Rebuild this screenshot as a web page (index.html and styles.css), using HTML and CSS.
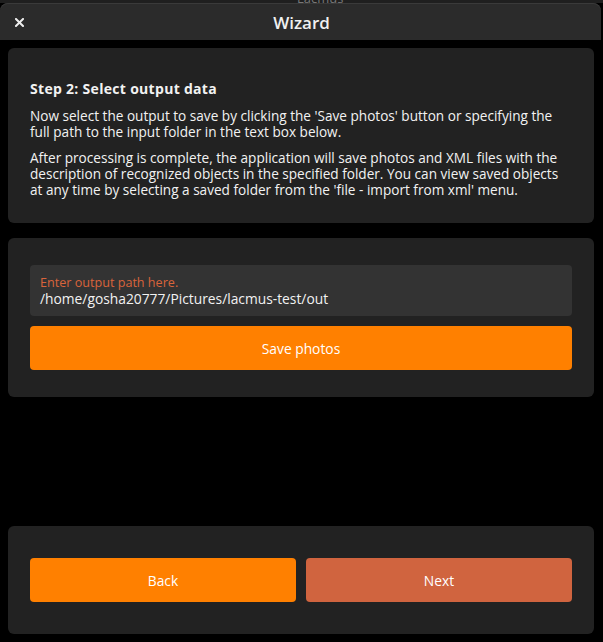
FILE: index.html
```html
<!DOCTYPE html>
<html>
<head>
<meta charset="utf-8">
<link rel="stylesheet" href="styles.css">
</head>
<body>
<div class="behind"><span class="behind-title">Lacmus</span></div>
<div class="window">
  <div class="titlebar">
    <svg class="close" width="9" height="9" viewBox="0 0 9 9"><path d="M1 1L8 8M8 1L1 8" stroke="#eee" stroke-width="2" stroke-linecap="square"/></svg>
    <span class="title">Wizard</span>
  </div>
  <div class="content">
    <section class="panel panel-info">
      <h2 class="heading">Step 2: Select output data</h2>
      <p class="text">Now select the output to save by clicking the 'Save photos' button or specifying the full path to the input folder in the text box below.</p>
      <p class="text">After processing is complete, the application will save photos and XML files with the description of recognized objects in the specified folder. You can view saved objects at any time by selecting a saved folder from the 'file - import from xml' menu.</p>
    </section>
    <section class="panel panel-input">
      <div class="field">
        <div class="field-label">Enter output path here.</div>
        <div class="field-value">/home/gosha20777/Pictures/lacmus-test/out</div>
      </div>
      <button class="btn btn-primary">Save photos</button>
    </section>
    <div class="spacer"></div>
    <section class="panel panel-nav">
      <button class="btn btn-primary">Back</button>
      <button class="btn btn-next">Next</button>
    </section>
  </div>
</div>
</body>
</html>
```

FILE: styles.css
```css
html, body {
  margin: 0;
  padding: 0;
  background: #000;
  width: 603px;
  height: 642px;
  overflow: hidden;
  font-family: "Open Sans", "Noto Sans", sans-serif;
  color: #f2f2f2;
}
.behind {
  height: 3px;
  background: #1f1f1f;
  position: relative;
  overflow: hidden;
}
.behind-title {
  position: absolute;
  left: 297px;
  top: -11px;
  font-size: 13px;
  color: #777;
}
.window {
  width: 601px;
  height: 639px;
  display: flex;
  flex-direction: column;
}
.titlebar {
  height: 37px;
  flex: none;
  background: #2b2b2b;
  border-radius: 8px 8px 0 0;
  box-shadow: inset 0 1px 0 #3a3a3a;
  display: flex;
  align-items: center;
  justify-content: center;
  position: relative;
}
.close {
  position: absolute;
  left: 15px;
  top: 15px;
}
.title {
  font-size: 17px;
  font-weight: 600;
  color: #f0f0f0;
  margin-left: 2px;
  margin-top: 2px;
}
.content {
  flex: 1;
  display: flex;
  flex-direction: column;
  padding: 8px 7px 8px 8px;
  gap: 15px;
}
.panel {
  background: #222;
  border-radius: 6px;
  box-sizing: border-box;
}
.panel-info {
  padding: 33px 22px 26px 22px;
  height: 175px;
}
.heading {
  margin: 0 0 11px 0;
  font-size: 14px;
  letter-spacing: 0.3px;
  line-height: 16px;
  font-weight: 700;
}
.text {
  margin: 0 0 10px 0;
  font-size: 13.6px;
  line-height: 16px;
}
.text:last-child {
  margin-bottom: 0;
}
.panel-input {
  padding: 27px 22px;
  display: flex;
  flex-direction: column;
  gap: 10px;
}
.field {
  height: 51px;
  box-sizing: border-box;
  background: #333;
  border-radius: 4px;
  padding: 10px 10px 0 10px;
}
.field-label {
  font-size: 12.6px;
  line-height: 16px;
  color: #d9643b;
}
.field-value {
  font-size: 13.8px;
  line-height: 16px;
  color: #f2f2f2;
}
.btn {
  height: 44px;
  border: none;
  border-radius: 4px;
  font-family: inherit;
  font-size: 13.8px;
  color: #fff;
  padding: 0;
}
.btn-primary {
  background: #ff8000;
}
.btn-next {
  background: #d0643f;
}
.spacer {
  flex: 1;
}
.panel-nav {
  padding: 32px 22px;
  display: flex;
  gap: 10px;
}
.panel-nav .btn {
  flex: 1;
}
```
